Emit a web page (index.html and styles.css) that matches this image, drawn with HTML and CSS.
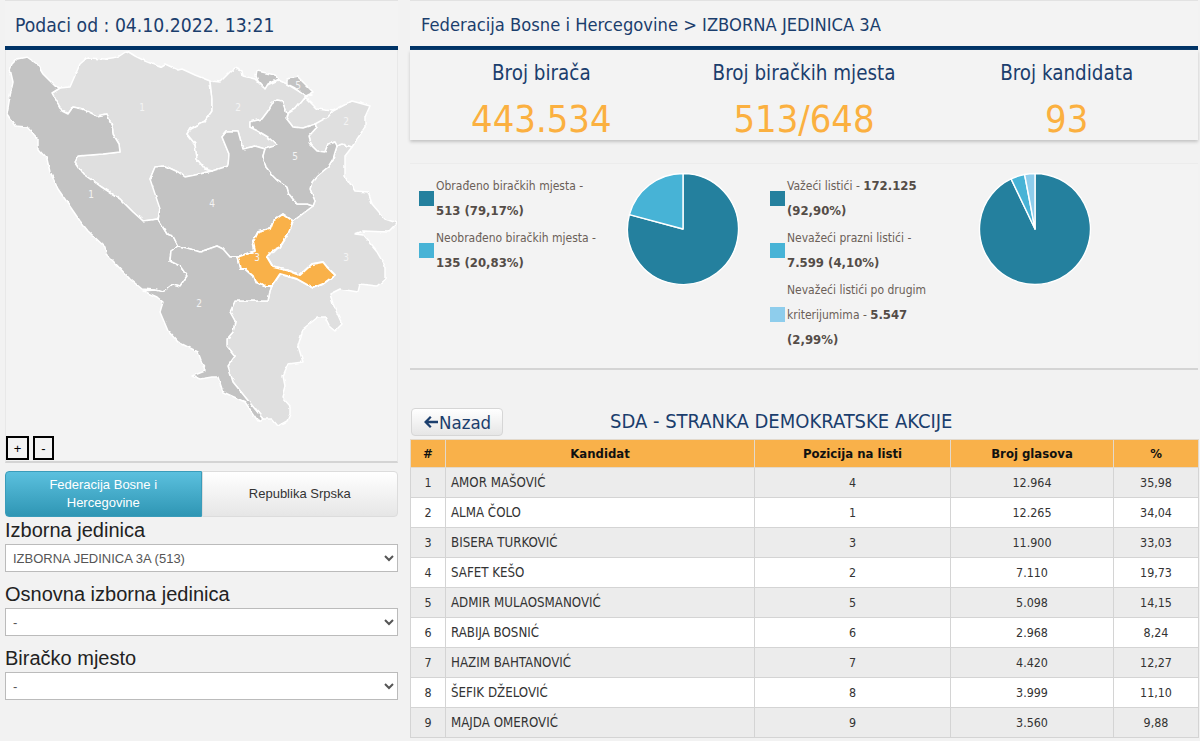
FILE: index.html
```html
<!DOCTYPE html>
<html lang="bs">
<head>
<meta charset="utf-8">
<title>Izbori</title>
<link rel="stylesheet" href="styles.css">
</head>
<body>
<div class="layout">
  <aside class="left">
    <div class="head head-big">Podaci od : 04.10.2022. 13:21</div>
    <div class="map-panel">
      <svg class="map" width="391" height="411" viewBox="6 51 391 411">
        <defs>
          <filter id="wobble" x="0" y="0" width="100%" height="100%" filterUnits="objectBoundingBox">
            <feTurbulence type="fractalNoise" baseFrequency="0.14" numOctaves="2" seed="4"/>
            <feDisplacementMap in="SourceGraphic" scale="3.2" xChannelSelector="R" yChannelSelector="G"/>
          </filter>
        </defs>
        <g class="regions">
        <g class="rl">
          <polygon points="313,207 315,202 310,190 312,183 317,177 328,168 333,160 337,147 343,145 352,148 345,157 345,177 355,192 368,193 372,205 385,220 397,224 388,233 363,232 355,235 363,236 377,253 385,267 385,280 377,287 360,285 358,293 340,290 330,295 333,305 342,325 335,332 330,328 325,318 318,318 303,330 298,347 303,363 288,365 283,377 285,387 282,398 290,407 290,415 287,422 278,427 272,420 263,420 233,383 228,367 235,357 227,347 227,340 233,333 235,322 230,313 235,302 268,302 270,292 272,287 280,275 287,277 297,280 313,289 323,285 335,276 327,268 323,263 312,265 300,276 290,272 273,268 267,258 272,252 280,248 287,237 293,222"/>
          <polygon points="52,94 60,89 70,88 80,65 87,59 105,60 118,58 127,52 135,57 145,62 160,68 165,65 178,71 182,70 195,76 210,82 212,100 212,112 205,122 190,130 187,135 195,145 197,160 205,170 212,172 200,175 185,178 178,173 165,167 155,168 150,180 160,195 160,210 158,220 143,222 133,213 120,200 100,187 83,175 75,163 78,157 103,155 120,153 119,145 113,135 112,127 107,115 97,117 83,110 73,108 68,115 62,112"/>
          <polygon points="210,82 220,83 230,73 235,69 242,72 243,77 255,80 263,88 278,81 287,85 300,93 312,96 305,98 295,110 287,115 282,102 277,101 272,105 268,112 262,120 250,123 250,128 258,132 268,138 277,146 265,150 255,147 243,150 238,132 227,132 222,138 229,155 228,167 212,172 205,170 197,160 195,145 187,135 190,130 205,122 212,112 212,100"/>
          <polygon points="305,98 317,110 333,112 352,102 370,107 365,118 365,128 352,148 343,145 337,147 335,143 328,145 325,153 317,152 310,145 308,138 317,128 315,125 303,129 293,128 286,119 287,115 295,110"/>
        </g>
        <polyline class="divider" points="315,125 328,118 333,112"/>
        <g class="rd">
          <polygon points="12,65 17,60 27,58 37,65 43,75 55,87 60,89 52,94 62,112 68,115 73,108 83,110 97,117 107,115 112,127 113,135 119,145 120,153 103,155 78,157 75,163 83,175 100,187 120,200 133,213 143,222 158,220 167,235 173,237 178,247 171,252 170,262 180,267 187,277 180,287 173,285 163,293 155,291 142,290 130,280 113,262 106,255 105,248 88,232 80,222 58,190 50,173 47,160 38,150 38,140 27,128 15,127 7,115 10,97 13,83 10,70"/>
          <polygon points="158,220 160,210 150,180 155,168 165,167 178,173 185,178 200,175 212,172 228,167 229,155 222,138 227,132 238,132 243,150 255,147 265,150 263,157 266,168 273,177 278,182 287,188 289,195 297,205 307,205 313,207 293,222 283,215 273,222 270,230 258,233 253,243 255,252 237,258 230,258 223,250 217,247 200,253 187,249 178,247 173,237 167,235"/>
          <polygon points="178,247 187,249 200,253 217,247 223,250 230,258 237,258 240,270 245,270 253,277 255,283 262,285 265,287 272,287 270,292 268,302 235,302 230,313 235,322 233,333 227,340 227,347 235,357 228,367 233,383 263,420 258,422 245,403 223,393 218,378 212,378 200,380 192,377 205,372 198,353 178,343 168,332 160,313 163,303 157,298 143,292 155,291 163,293 173,285 180,287 187,277 180,267 170,262 171,252"/>
          <polygon points="272,105 277,101 282,102 287,115 286,119 293,128 303,129 315,125 317,128 308,138 310,145 317,152 325,153 328,145 335,143 337,147 333,160 328,168 317,177 312,183 310,190 315,202 313,207 307,205 297,205 289,195 287,188 278,182 273,177 266,168 263,157 265,150 277,146 268,138 258,132 250,128 250,123 262,120 268,112"/>
          <polygon points="257,72 262,73 275,76 278,80 268,85 265,90 258,82 256,77"/>
          <polygon points="287,80 298,78 313,93 305,97 295,89 287,85"/>
        </g>
        <polygon class="ro" points="283,215 293,222 287,237 280,248 272,252 267,258 273,268 290,272 300,276 312,265 323,263 327,268 335,276 323,285 313,289 297,280 287,277 280,275 272,287 265,287 262,285 255,283 253,277 245,270 240,270 237,258 255,252 253,243 258,233 270,230 273,222"/>
        </g>
        <g class="map-labels">
          <text x="142" y="112">1</text>
          <text x="238" y="112">2</text>
          <text x="346" y="126">2</text>
          <text x="295" y="161">5</text>
          <text x="298" y="90">5</text>
          <text x="91" y="199">1</text>
          <text x="212" y="208">4</text>
          <text x="257" y="262">3</text>
          <text x="346" y="262">3</text>
          <text x="199" y="308">2</text>
        </g>
      </svg>
      <div class="zoom-controls">
        <button class="zoom-btn zoom-plus" type="button">+</button>
        <button class="zoom-btn zoom-minus" type="button">-</button>
      </div>
    </div>
    <div class="tabs">
      <div class="tab tab-active">Federacija Bosne i Hercegovine</div>
      <div class="tab">Republika Srpska</div>
    </div>
    <label class="field-label field-first">Izborna jedinica</label>
    <select class="field"><option>IZBORNA JEDINICA 3A (513)</option></select>
    <label class="field-label">Osnovna izborna jedinica</label>
    <select class="field"><option>-</option></select>
    <label class="field-label">Biračko mjesto</label>
    <select class="field"><option>-</option></select>
  </aside>

  <main class="right">
    <div class="head">Federacija Bosne i Hercegovine &gt; IZBORNA JEDINICA 3A</div>
    <div class="stats">
      <div class="stat"><div class="stat-label">Broj birača</div><div class="stat-value">443.534</div></div>
      <div class="stat"><div class="stat-label">Broj biračkih mjesta</div><div class="stat-value">513/648</div></div>
      <div class="stat"><div class="stat-label">Broj kandidata</div><div class="stat-value">93</div></div>
    </div>

    <div class="charts">
      <div class="legend">
        <div class="legend-item"><span class="swatch s1"></span><span class="legend-text">Obrađeno biračkih mjesta -<br><b>513 (79,17%)</b></span></div>
        <div class="legend-item"><span class="swatch s2"></span><span class="legend-text">Neobrađeno biračkih mjesta -<br><b>135 (20,83%)</b></span></div>
      </div>
      <svg class="pie" width="114" height="114" viewBox="-57 -57 114 114">
        <path class="p1" d="M0 0V-55.5A55.5 55.5 0 1 1 -53.6 -14.4Z"/>
        <path class="p2" d="M0 0L-53.6 -14.4A55.5 55.5 0 0 1 0 -55.5Z"/>
      </svg>
      <div class="legend legend-second">
        <div class="legend-item"><span class="swatch s1"></span><span class="legend-text">Važeći listići - <b>172.125</b><br><b>(92,90%)</b></span></div>
        <div class="legend-item"><span class="swatch s2"></span><span class="legend-text">Nevažeći prazni listići -<br><b>7.599 (4,10%)</b></span></div>
        <div class="legend-item"><span class="swatch s3"></span><span class="legend-text">Nevažeći listići po drugim<br>kriterijumima - <b>5.547</b><br><b>(2,99%)</b></span></div>
      </div>
      <svg class="pie" width="114" height="114" viewBox="-57 -57 114 114">
        <path class="p1" d="M0 0V-55.5A55.5 55.5 0 1 1 -23.9 -50.1Z"/>
        <path class="p2" d="M0 0L-23.9 -50.1A55.5 55.5 0 0 1 -10.4 -54.5Z"/>
        <path class="p3" d="M0 0L-10.4 -54.5A55.5 55.5 0 0 1 0 -55.5Z"/>
      </svg>
    </div>

    <div class="list-head">
      <button class="back" type="button">
        <svg class="back-icon" width="15" height="14" viewBox="0 0 15 14"><path d="M7 1 1 7l6 6 1.6-1.6L5.4 8.2H15V5.8H5.4L8.6 2.6Z"/></svg>Nazad
      </button>
      <div class="list-title">SDA - STRANKA DEMOKRATSKE AKCIJE</div>
    </div>

    <table class="results">
      <colgroup><col class="c1"><col class="c2"><col class="c3"><col class="c4"><col class="c5"></colgroup>
      <thead><tr><th>#</th><th>Kandidat</th><th>Pozicija na listi</th><th>Broj glasova</th><th>%</th></tr></thead>
      <tbody>
        <tr><td>1</td><td class="name">AMOR MAŠOVIĆ</td><td>4</td><td>12.964</td><td>35,98</td></tr>
        <tr><td>2</td><td class="name">ALMA ČOLO</td><td>1</td><td>12.265</td><td>34,04</td></tr>
        <tr><td>3</td><td class="name">BISERA TURKOVIĆ</td><td>3</td><td>11.900</td><td>33,03</td></tr>
        <tr><td>4</td><td class="name">SAFET KEŠO</td><td>2</td><td>7.110</td><td>19,73</td></tr>
        <tr><td>5</td><td class="name">ADMIR MULAOSMANOVIĆ</td><td>5</td><td>5.098</td><td>14,15</td></tr>
        <tr><td>6</td><td class="name">RABIJA BOSNIĆ</td><td>6</td><td>2.968</td><td>8,24</td></tr>
        <tr><td>7</td><td class="name">HAZIM BAHTANOVIĆ</td><td>7</td><td>4.420</td><td>12,27</td></tr>
        <tr><td>8</td><td class="name">ŠEFIK DŽELOVIĆ</td><td>8</td><td>3.999</td><td>11,10</td></tr>
        <tr><td>9</td><td class="name">MAJDA OMEROVIĆ</td><td>9</td><td>3.560</td><td>9,88</td></tr>
      </tbody>
    </table>
  </main>
</div>
</body>
</html>
```
FILE: styles.css
```css
* { box-sizing: border-box; }
html, body { margin: 0; height: 741px; overflow: hidden; }
body {
  background: #f2f2f2;
  font-family: "DejaVu Sans", Tahoma, sans-serif;
  font-stretch: condensed;
  color: #333;
}
.layout { display: flex; gap: 12px; padding: 1px 2px 0 5px; align-items: flex-start; }
.left { width: 393px; flex: none; }
.right { width: 788px; flex: none; }

.head {
  height: 49px;
  padding: 7px 0 0 11px;
  line-height: 34px;
  font-size: 18.2px;
  color: #1b3e6d;
  background: #f3f3f3;
  border-bottom: 4px solid #003366;
  box-shadow: 0 -1px 0 #e2e2e2;
}
.head-big { font-size: 19.2px; padding: 8px 0 0 10px; }

.map-panel {
  position: relative;
  height: 413px;
  background: #f3f3f3;
  border-left: 1px solid #e8e8e8;
  border-right: 1px solid #e8e8e8;
  border-bottom: 2px solid #d4d4d4;
  overflow: hidden;
}
.map { display: block; }
.regions { filter: url(#wobble); }
.rl polygon { fill: #dfdfdf; stroke: #fff; stroke-width: 1.5; stroke-linejoin: round; }
.rd polygon { fill: #c3c3c3; stroke: #fff; stroke-width: 1.5; stroke-linejoin: round; }
.ro { fill: #f9b14a; stroke: #fff; stroke-width: 2; stroke-linejoin: round; }
.divider { fill: none; stroke: #fff; stroke-width: 1.5; }
.map-labels text { font-size: 10px; fill: #f4f4f4; text-anchor: middle; }

.zoom-controls { position: absolute; left: 0; bottom: 1px; display: flex; gap: 4px; }
.zoom-btn {
  width: 23px;
  height: 24px;
  padding: 0;
  border: 2px solid #000;
  background: #f3f3f3;
  color: #000;
  font: 13px "Liberation Sans", sans-serif;
}
.zoom-minus { width: 21px; }

.tabs { display: flex; margin-top: 8px; height: 46px; }
.tab {
  flex: 1;
  display: flex;
  align-items: center;
  justify-content: center;
  text-align: center;
  padding: 0 30px;
  font: 13px/18px "Liberation Sans", Arial, sans-serif;
  color: #333;
  background: linear-gradient(#ffffff, #e6e6e6);
  border: 1px solid #dcdcdc;
  border-radius: 0 4px 4px 0;
}
.tab-active {
  color: #fff;
  background: linear-gradient(#5bc0de, #2f96b4);
  border-color: #3a9cba;
  border-radius: 4px 0 0 4px;
}

.field-label {
  display: block;
  height: 28px;
  margin-top: 8px;
  font: 20px/28px "Liberation Sans", Arial, sans-serif;
  color: #222;
}
.field-first { margin-top: 0; height: 27px; line-height: 26px; }
.field {
  display: block;
  width: 393px;
  height: 28px;
  padding: 0 3px;
  background-color: #fff;
  border: 1px solid #bbb;
  border-radius: 0;
  color: #555;
  font: 13px "Liberation Sans", Arial, sans-serif;
}

.stats {
  display: flex;
  height: 90px;
  background: #f3f3f3;
  box-shadow: 0 2px 3px #c4c4c4;
}
.stat { flex: 1; text-align: center; }
.stat-label { font-size: 20.4px; line-height: 24px; margin-top: 11px; color: #1b3e6d; }
.stat-value { font-size: 37.8px; line-height: 44px; margin-top: 12px; color: #fbb040; }

.charts {
  display: flex;
  align-items: flex-start;
  height: 207px;
  margin-top: 23px;
  padding: 8px 0 0 9px;
  background: #f3f3f3;
  border-top: 1px solid #ececec;
  border-bottom: 2px solid #d4d4d4;
}
.legend { width: 207px; flex: none; padding-top: 2px; display: flex; flex-direction: column; gap: 2px; }
.legend-second { width: 208px; margin-left: 30px; }
.legend-item { display: flex; align-items: center; gap: 2px; }
.swatch { width: 15px; height: 15px; flex: none; margin-top: -2px; }
.s1 { background: #24809e; }
.s2 { background: #47b3d6; }
.s3 { background: #8ecdec; }
.legend-text { font-size: 12px; line-height: 25px; color: #6b5f58; }
.legend-text b { font-size: 13px; line-height: 1; color: #544c47; }
.pie { flex: none; }
.p1, .p2, .p3 { stroke: #fff; stroke-width: 1.4; stroke-linejoin: round; }
.p1 { fill: #24809e; }
.p2 { fill: #47b3d6; }
.p3 { fill: #8ecdec; }

.list-head { display: flex; align-items: center; height: 28px; margin-top: 38px; }
.back {
  display: flex;
  align-items: center;
  gap: 1px;
  width: 92px;
  height: 28px;
  margin-left: 1px;
  padding: 0 0 0 11px;
  background: linear-gradient(#ffffff, #e6e6e6);
  border: 1px solid #d6d6d6;
  border-radius: 4px;
  color: #1b3e6d;
  font-family: "DejaVu Sans", Tahoma, sans-serif;
  font-stretch: condensed;
  font-size: 18.5px;
}
.back-icon { fill: #1b3e6d; flex: none; }
.list-title { margin: -3px 0 0 107px; font-size: 20px; color: #1b3e6d; white-space: nowrap; }

.results {
  width: 788px;
  margin-top: 3px;
  border-collapse: collapse;
  table-layout: fixed;
  font-size: 12.4px;
}
.c1 { width: 35px; }
.c2 { width: 309px; }
.c3 { width: 196px; }
.c4 { width: 163px; }
.c5 { width: 85px; }
.results th {
  height: 28px;
  padding: 0;
  background: #f9b14a;
  border: 1px solid #e2d9cc;
  color: #111;
  font-size: 13px;
  font-weight: bold;
  text-align: center;
}
.results td {
  height: 30px;
  padding: 0;
  border: 1px solid #d4d4d4;
  background: #fff;
  text-align: center;
  color: #333;
}
.results tbody tr:nth-child(odd) td { background: #ececec; }
.results td.name { text-align: left; padding-left: 5px; font-size: 13.2px; }
```
